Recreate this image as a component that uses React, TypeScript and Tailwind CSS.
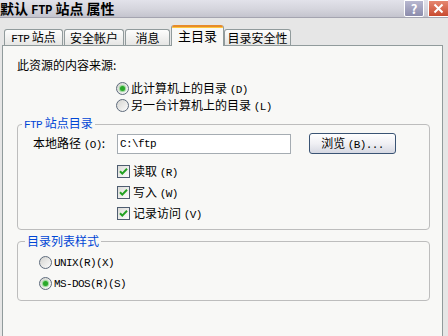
import React from "react";

function M({ children, bold = false }: { children: React.ReactNode; bold?: boolean }) {
  return (
    <span className={bold ? "font-[family-name:Liberation_Mono,monospace] text-[12px] font-bold tracking-[-0.2px]" : "font-[family-name:Liberation_Mono,monospace] text-[11px] tracking-[-0.6px]"}>
      {children}
    </span>
  );
}

function Radio({ checked }: { checked?: boolean }) {
  return (
    <span className="inline-flex w-[13px] h-[13px] shrink-0 rounded-full border border-[#5e6b7c] bg-linear-to-br from-[#d4d4d0] to-[#fcfcfc] items-center justify-center">
      {checked && <span className="w-[5px] h-[5px] rounded-full bg-[#2aa82a] shadow-[0_0_1px_1px_#8fd68f]" />}
    </span>
  );
}

function Check() {
  return (
    <span className="inline-flex w-[13px] h-[13px] shrink-0 border border-[#4e5d70] bg-linear-to-br from-[#dcdcd8] to-[#fcfcfc] items-center justify-center">
      <svg width="9" height="9" viewBox="0 0 9 9">
        <path d="M1 4.2 L3.3 6.6 L8 1.8" fill="none" stroke="#21a121" strokeWidth="2" />
      </svg>
    </span>
  );
}

function Tab({ children, w, selected }: { children: React.ReactNode; w: string; selected?: boolean }) {
  if (selected) {
    return (
      <div className={`${w} h-[21px] -mb-px z-10 relative bg-[#f8f8f6] border-x border-[#919b9c] rounded-t-[3px] overflow-hidden flex flex-col`}>
        <div className="h-[2px] bg-[#e68b2c]" />
        <div className="h-[1px] bg-[#ffc73c]" />
        <div className="flex-1 flex items-center justify-center text-[13px] leading-[16px] pb-[2px]">{children}</div>
      </div>
    );
  }
  return (
    <div className={`${w} h-[16px] bg-linear-to-b from-[#fdfdfd] to-[#e6e6e4] border border-b-0 border-[#919b9c] rounded-t-[3px] flex items-center justify-center text-[12px] leading-[14px]`}>
      {children}
    </div>
  );
}

export default function App() {
  return (
    <div className="w-[448px] h-[336px] overflow-hidden bg-[#e6e6e6] text-black font-[family-name:Noto_Sans_CJK_SC,sans-serif]">
      {/* Title bar */}
      <div className="h-[18px] flex items-start justify-between bg-linear-to-b from-[#e2e2ea] via-[#d6d6de] to-[#c4c4ce] border-b border-[#a4a4b0]">
        <div className="text-[14px] font-bold leading-[16px] whitespace-pre">默认 <M bold>FTP</M> 站点 属性</div>
        <div className="flex gap-[4px]">
          <div className="w-[20px] h-[17px] rounded-b-[2px] border border-white bg-linear-to-b from-[#b8b8d0] to-[#8c8cac] flex items-center justify-center text-white text-[13px] font-bold leading-none">?</div>
          <div className="w-[20px] h-[17px] rounded-bl-[2px] border border-white border-r-0 bg-linear-to-b from-[#e5866f] to-[#c84a30] flex items-center justify-center">
            <svg width="11" height="11" viewBox="0 0 11 11">
              <path d="M1.5 1.5 L9.5 9.5 M9.5 1.5 L1.5 9.5" stroke="white" strokeWidth="2" />
            </svg>
          </div>
        </div>
      </div>

      {/* Tabs */}
      <div className="h-[27px] flex items-end pl-[4px]">
        <Tab w="w-[59px]"><span className="whitespace-pre"><M>FTP</M> 站点</span></Tab>
        <Tab w="w-[60px] ml-[1px]">安全帐户</Tab>
        <Tab w="w-[45px] ml-[1px]">消息</Tab>
        <Tab w="w-[53px] ml-[1px]" selected>主目录</Tab>
        <Tab w="w-[67px]">目录安全性</Tab>
      </div>

      {/* Panel */}
      <div className="ml-[2px] w-[441px] h-[300px] border border-[#919b9c] bg-[#f8f8f6] pl-[14px] pt-[11px] text-[12px] leading-[16px]">
        <div>此资源的内容来源:</div>
        <div className="mt-[7px] ml-[99px] flex flex-col">
          <div className="h-[17px] flex items-center gap-[2px]">
            <Radio checked />
            <span>此计算机上的目录 <M>(D)</M></span>
          </div>
          <div className="h-[17px] flex items-center gap-[2px]">
            <Radio />
            <span>另一台计算机上的目录 <M>(L)</M></span>
          </div>
        </div>

        <fieldset className="mt-[1px] w-[413px] border border-[#bdbdbd] rounded-[4px] p-0">
          <legend className="ml-[4px] px-[2px] text-[#0046d5] leading-[16px] whitespace-pre"><M>FTP</M> 站点目录</legend>
          <div className="pl-[15px] pb-[5px]">
            <div className="flex items-center h-[21px]">
              <span className="w-[84px]">本地路径 <M>(O)</M>:</span>
              <div className="w-[174px] h-[20px] border border-[#a5acb2] bg-white flex items-center pl-[2px]">
                <M>C:\ftp</M>
              </div>
              <div className="ml-[18px] w-[87px] h-[21px] rounded-[3px] border border-[#3a5474] bg-linear-to-b from-white via-[#f0f0f4] to-[#d6d8e2] flex items-center justify-center">
                <span>浏览 <M>(B)...</M></span>
              </div>
            </div>
            <div className="mt-[7px] ml-[84px] flex flex-col">
              <div className="h-[21px] flex items-center gap-[3px]"><Check /><span>读取 <M>(R)</M></span></div>
              <div className="h-[21px] flex items-center gap-[3px]"><Check /><span>写入 <M>(W)</M></span></div>
              <div className="h-[21px] flex items-center gap-[3px]"><Check /><span>记录访问 <M>(V)</M></span></div>
            </div>
          </div>
        </fieldset>

        <fieldset className="mt-[3px] w-[413px] border border-[#bdbdbd] rounded-[4px] p-0">
          <legend className="ml-[7px] px-[2px] text-[#0046d5] leading-[16px]">目录列表样式</legend>
          <div className="pl-[21px] pt-[3px] pb-[6px] flex flex-col">
            <div className="h-[21px] flex items-center gap-[2px]"><Radio /><M>UNIX(R)(X)</M></div>
            <div className="h-[21px] flex items-center gap-[2px]"><Radio checked /><M>MS-DOS(R)(S)</M></div>
          </div>
        </fieldset>
      </div>
    </div>
  );
}
